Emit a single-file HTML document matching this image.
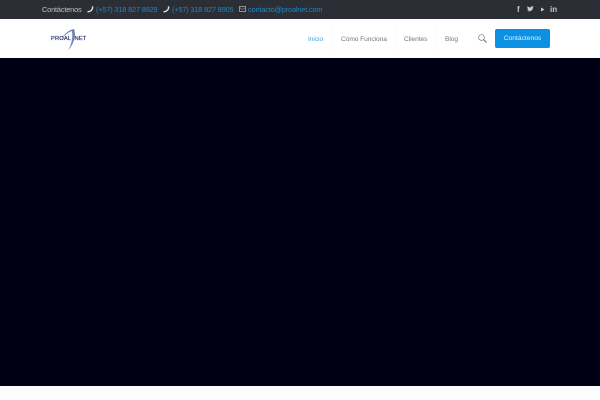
<!DOCTYPE html>
<html lang="es">
<head>
<meta charset="utf-8">
<style>
html,body{margin:0;padding:0;width:600px;height:400px;overflow:hidden;background:#fff;font-family:"Liberation Sans",sans-serif}
.a{position:absolute;white-space:nowrap}
#top{position:absolute;left:0;top:0;width:600px;height:19px;background:#2b2e34}
#nav{position:absolute;left:0;top:19px;width:600px;height:39px;background:#fff}
#hero{position:absolute;left:0;top:58px;width:600px;height:328px;background:#000014}
#foot{position:absolute;left:0;top:386px;width:600px;height:14px;background:#fdfdfd}
.t{font-size:7.4px;line-height:10px;top:4.700px;letter-spacing:-.18px}
.b{color:#1b88c9}
.n{font-size:6.600px;line-height:10px;top:34.700px;color:#777;letter-spacing:-.05px}
.sep{position:absolute;top:27px;width:1px;height:23px;background:#f8f8f8}
#btn{position:absolute;left:495px;top:29px;width:55px;height:19px;background:#0c90e4;border-radius:2px;color:#e8f4fc;font-size:6.700px;line-height:19.500px;text-align:center}
svg{position:absolute;overflow:visible}
</style>
</head>
<body>
<div id="top"></div>
<div id="nav"></div>
<div id="hero"></div>
<div id="foot"></div>

<div class="a t" style="left:42px;color:#bfc2c6">Contáctenos</div>
<svg style="left:87px;top:6px" width="7" height="7" viewBox="0 0 7 7"><path d="M5.600 .8C5.800 3.600 3.800 5.600 1 5.800" fill="none" stroke="#ddd" stroke-width="1.400" stroke-linecap="round"/></svg>
<div class="a t b" style="left:96px">(+57) 318 827 8929</div>
<svg style="left:163px;top:6px" width="7" height="7" viewBox="0 0 7 7"><path d="M5.600 .8C5.800 3.600 3.800 5.600 1 5.800" fill="none" stroke="#ddd" stroke-width="1.400" stroke-linecap="round"/></svg>
<div class="a t b" style="left:172px">(+57) 318 827 8905</div>
<svg style="left:239px;top:6px" width="7" height="6" viewBox="0 0 7 6"><rect x=".5" y=".5" width="6" height="5" fill="none" stroke="#aaa" stroke-width=".8"/><path d="M.5 1.500L3.500 3.500 6.500 1.500" fill="none" stroke="#aaa" stroke-width=".5"/></svg>
<div class="a t b" style="left:248px">contacto@proalnet.com</div>

<div class="a" style="left:517px;top:4.500px;font:bold 8px/10px 'Liberation Sans',sans-serif;color:#c8cacc">f</div>
<svg style="left:527px;top:6px" width="7" height="6" viewBox="0 0 7 6"><path d="M0 5C3 6 6 4.500 6 1.500L7 .5 6 .7C5.500 0 4 0 3.700 1.500 2.500 1.500 1.200 1 .5 .3 0 1.500 .5 2.500 1 3L.4 2.800C.5 3.600 1 4 1.700 4.300 1.200 4.800.7 5 0 5Z" fill="#c8cacc"/></svg>
<svg style="left:541px;top:7px" width="4" height="5" viewBox="0 0 4 5"><path d="M0 .5L3.500 2.500 0 4.500Z" fill="#c8cacc"/></svg>
<div class="a" style="left:550px;top:4.500px;font:bold 8px/10px 'Liberation Sans',sans-serif;color:#c8cacc">in</div>

<svg style="left:48px;top:27px" width="40" height="26" viewBox="0 0 40 26">
<path d="M13 12C17 6 22 2.500 26 2 28.500 8 26 17 20 23.500 24 17 25 9 23.800 4 20 5.500 16.500 8.500 13 12Z" fill="#4657a0" opacity=".75"/>
</svg>
<div class="a" style="left:51px;top:34.500px;font:5.800px/8px 'Liberation Sans',sans-serif;color:#2c3475;letter-spacing:.1px;-webkit-text-stroke:.2px #2c3475">PROAL</div>
<div class="a" style="left:74.500px;top:34.500px;font:5.800px/8px 'Liberation Sans',sans-serif;color:#2c3475;letter-spacing:.1px;-webkit-text-stroke:.2px #2c3475">NET</div>

<div class="a n" style="left:308px;color:#4ba5d8">Inicio</div>
<div class="sep" style="left:332px"></div>
<div class="a n" style="left:341px">Cómo Funciona</div>
<div class="sep" style="left:395px"></div>
<div class="a n" style="left:404px">Clientes</div>
<div class="sep" style="left:436px"></div>
<div class="a n" style="left:445px">Blog</div>

<svg style="left:478px;top:34px" width="9" height="9" viewBox="0 0 9 9"><circle cx="3.500" cy="3.500" r="2.900" fill="none" stroke="#8a8a8a" stroke-width=".8"/><path d="M5.700 5.700L8.500 8.500" stroke="#666" stroke-width="1"/></svg>
<div id="btn">Contáctenos</div>
</body>
</html>
